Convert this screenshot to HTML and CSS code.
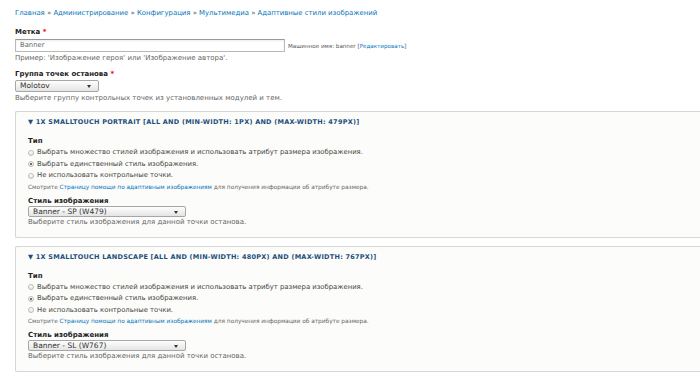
FILE: index.html
```html
<!DOCTYPE html>
<html lang="ru">
<head>
    <meta charset="UTF-8">
    <title>Адаптивные стили изображений</title>
    <link rel="stylesheet" href="styles.css">
</head>
<body>

<div class="breadcrumb">
    <a href="#">Главная</a> » <a href="#">Администрирование</a> » <a href="#">Конфигурация</a> » <a href="#">Мультимедиа</a> » <a href="#">Адаптивные стили изображений</a>
</div>

<div class="form-item first">
    <label class="label">Метка <span class="req">*</span></label>
    <div class="machine-row">
        <div class="text-input">Banner</div>
        <span class="machine-name">Машинное имя: banner [<a href="#">Редактировать</a>]</span>
    </div>
    <div class="description">Пример: 'Изображение героя' или 'Изображение автора'.</div>
</div>

<div class="form-item group">
    <label class="label">Группа точек останова <span class="req">*</span></label>
    <div class="select select-group">Molotov<span class="arrow"></span></div>
    <div class="description">Выберите группу контрольных точек из установленных модулей и тем.</div>
</div>

<div class="details">
    <div class="summary">▼ 1X SMALLTOUCH PORTRAIT [ALL AND (MIN-WIDTH: 1PX) AND (MAX-WIDTH: 479PX)]</div>
    <div class="label type-label">Тип</div>
    <div class="radios">
        <div class="radio"><span class="dot"></span>Выбрать множество стилей изображения и использовать атрибут размера изображения.</div>
        <div class="radio"><span class="dot checked"></span>Выбрать единственный стиль изображения.</div>
        <div class="radio"><span class="dot"></span>Не использовать контрольные точки.</div>
    </div>
    <div class="note">Смотрите <a href="#">Страницу помощи по адаптивным изображениям</a> для получения информации об атрибуте размера.</div>
    <div class="label style-label">Стиль изображения</div>
    <div class="select select-style">Banner - SP (W479)<span class="arrow"></span></div>
    <div class="description">Выберите стиль изображения для данной точки останова.</div>
</div>

<div class="details">
    <div class="summary">▼ 1X SMALLTOUCH LANDSCAPE [ALL AND (MIN-WIDTH: 480PX) AND (MAX-WIDTH: 767PX)]</div>
    <div class="label type-label">Тип</div>
    <div class="radios">
        <div class="radio"><span class="dot"></span>Выбрать множество стилей изображения и использовать атрибут размера изображения.</div>
        <div class="radio"><span class="dot checked"></span>Выбрать единственный стиль изображения.</div>
        <div class="radio"><span class="dot"></span>Не использовать контрольные точки.</div>
    </div>
    <div class="note">Смотрите <a href="#">Страницу помощи по адаптивным изображениям</a> для получения информации об атрибуте размера.</div>
    <div class="label style-label">Стиль изображения</div>
    <div class="select select-style">Banner - SL (W767)<span class="arrow"></span></div>
    <div class="description">Выберите стиль изображения для данной точки останова.</div>
</div>

</body>
</html>
```

FILE: styles.css
```css
/* Reset */
* {
    margin: 0;
    padding: 0;
    box-sizing: border-box;
}

html {
    overflow: hidden;
}

body {
    font-family: 'DejaVu Sans', Verdana, sans-serif;
    font-size: 7px;
    line-height: 10px;
    color: #333;
    background: #fff;
    padding: 8px 0 0 15px;
}

a {
    color: #0074bd;
    text-decoration: none;
}

/* Breadcrumb */
.breadcrumb {
    font-size: 6.9px;
    color: #555;
}

/* Form items */
.form-item.first {
    margin-top: 9px;
}

.form-item.group {
    margin-top: 6px;
}

.label {
    display: block;
    font-weight: bold;
    color: #222;
}

.req {
    color: #e00;
}

.machine-row {
    display: flex;
    align-items: center;
    margin-top: 2px;
}

.text-input {
    width: 270px;
    height: 13px;
    border: 1px solid #b8b8b8;
    border-top-color: #999;
    border-radius: 1px;
    padding-left: 4px;
    line-height: 11px;
    color: #666;
    font-size: 6.8px;
    background: #fff;
    box-shadow: inset 0 1px 2px rgba(0, 0, 0, 0.08);
}

.machine-name {
    font-size: 5.6px;
    margin-left: 3px;
    color: #555;
}

.description {
    color: #666;
    margin-top: 1px;
}

/* Selects */
.select {
    position: relative;
    height: 12px;
    margin-top: 1px;
    padding-left: 4px;
    border: 1px solid #a6a6a6;
    border-radius: 2px;
    background: linear-gradient(#fefefe, #e4e4e4);
    font-size: 7.5px;
    line-height: 10px;
    color: #333;
}

.select .arrow {
    position: absolute;
    right: 7px;
    top: 4px;
    border-left: 2.5px solid transparent;
    border-right: 2.5px solid transparent;
    border-top: 3px solid #333;
}

.select-group {
    width: 84px;
}

.select-style {
    width: 158px;
    height: 11px;
    line-height: 9px;
    margin-top: 0;
}

/* Details / fieldsets */
.details {
    margin-top: 8px;
    width: 720px;
    border: 1px solid #d6d6d4;
    border-right: none;
    border-radius: 2px;
    background: #fcfcfa;
    padding: 5px 12px 10px 12px;
}

.details + .details {
    margin-top: 8px;
}

.summary {
    font-weight: bold;
    font-size: 6.5px;
    letter-spacing: 0.25px;
    color: #1c4f7c;
}

.type-label {
    margin-top: 9px;
}

.radios {
    margin-top: 1px;
    color: #444;
    font-size: 6.85px;
}

.radio {
    display: flex;
    align-items: center;
    line-height: 11.5px;
}

.dot {
    width: 6px;
    height: 6px;
    border: 1px solid #bbb;
    border-radius: 50%;
    background: linear-gradient(#fff, #e6e6e6);
    margin-right: 3px;
    position: relative;
}

.dot.checked::after {
    content: '';
    position: absolute;
    left: 1px;
    top: 1px;
    width: 2px;
    height: 2px;
    border-radius: 50%;
    background: #444;
}

.note {
    font-size: 5.8px;
    color: #666;
}

.style-label {
    margin-top: 4px;
}

.details .description {
    margin-top: 0;
}
```
